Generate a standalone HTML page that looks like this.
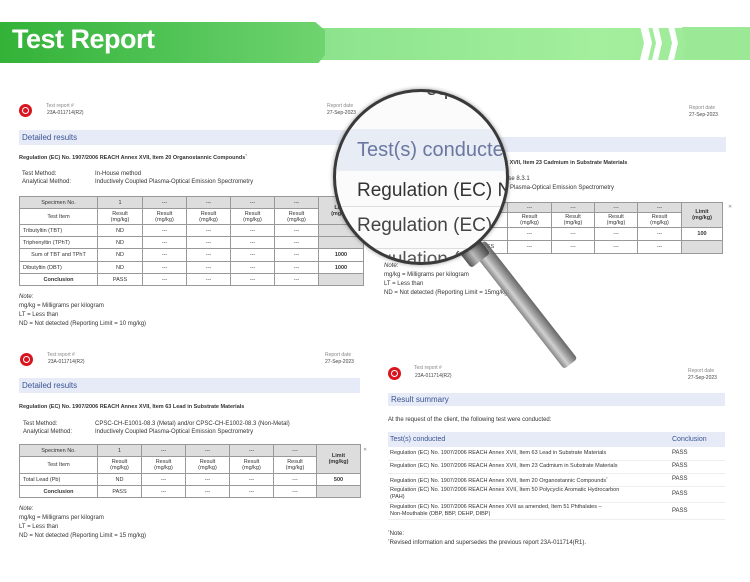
<!DOCTYPE html>
<html><head><meta charset="utf-8"><style>
*{margin:0;padding:0;box-sizing:border-box}
body{width:750px;height:582px;background:#fff;position:relative;overflow:hidden;font-family:"Liberation Sans",sans-serif;color:#222}
.a{position:absolute;white-space:nowrap}
.s{font-size:5px;color:#888}
.t{font-size:6px;color:#333}
.b{font-weight:bold}
.bar{position:absolute;background:#e6ebf7;color:#3b5592;font-size:8px;padding-left:3px;display:flex;align-items:center}
.logo{position:absolute;width:13px;height:13px;border-radius:50%;background:#d9141e}
.logo:after{content:"";position:absolute;left:3px;top:3px;width:5px;height:5px;border:1.3px solid #fff;border-radius:50%}
table{position:absolute;border-collapse:collapse;font-size:5.5px;color:#333;table-layout:fixed}
td{border:1px solid #999;text-align:center;padding:0;line-height:6px}
td.l{text-align:left;padding-left:3px}
.g{background:#ddd}
</style></head><body>

<!-- banner -->
<div class="a" style="left:0;top:27px;width:750px;height:57px;background:linear-gradient(90deg,#4cc24e 0%,#8ee48e 45%,#a3ef9e 80%,#9be896 100%);top:28px;height:32px"></div>
<div class="a" style="left:0;top:22px;width:325px;height:41px;background:linear-gradient(90deg,#33b238,#55c65a 60%,#6fd46f);clip-path:polygon(0 0,97% 0,100% 20%,100% 80%,98% 100%,0 100%)"></div>
<div class="a" style="left:12px;top:24px;font-size:27px;font-weight:bold;color:#fff;letter-spacing:-.5px">Test Report</div>
<svg class="a" style="left:640px;top:26px" width="110" height="34"><g fill="#fff"><polygon points="0,0 8,0 12,17 8,34 0,34 4,17"/><polygon points="12,0 18,0 22,17 18,34 12,34 16,17"/><polygon points="28,0 34,0 38,17 34,34 28,34 32,17"/></g><polygon points="42,1 110,1 110,33 42,33 46,17" fill="#9be896"/></svg>

<!-- doc 1 -->
<div class="logo" style="left:19px;top:104px"></div>
<div class="a s" style="left:46px;top:103px">Test report #</div>
<div class="a s" style="left:47px;top:110px;color:#444">23A-011714(R2)</div>
<div class="a s" style="left:327px;top:103px">Report date</div>
<div class="a s" style="left:327px;top:110px;color:#444">27-Sep-2023</div>
<div class="bar" style="left:19px;top:130px;width:346px;height:15px">Detailed results</div>
<div class="a t b" style="left:19px;top:153px;font-size:5.5px">Regulation (EC) No. 1907/2006 REACH Annex XVII, Item 20 Organostannic Compounds<sup style="font-size:3px">†</sup></div>
<div class="a t" style="left:22px;top:171px">Test Method:</div>
<div class="a t" style="left:95px;top:171px">In-House method</div>
<div class="a t" style="left:22px;top:179px">Analytical Method:</div>
<div class="a t" style="left:95px;top:179px">Inductively Coupled Plasma-Optical Emission Spectrometry</div>
<table style="left:19px;top:196px;width:344px">
<col style="width:78px"><col style="width:45px"><col style="width:44px"><col style="width:44px"><col style="width:44px"><col style="width:44px"><col style="width:45px">
<tr style="height:12px"><td class="g">Specimen No.</td><td class="g">1</td><td class="g">---</td><td class="g">---</td><td class="g">---</td><td class="g">---</td><td class="g b" rowspan="2">Limit<br>(mg/kg)</td></tr>
<tr style="height:16px"><td>Test Item</td><td>Result<br>(mg/kg)</td><td>Result<br>(mg/kg)</td><td>Result<br>(mg/kg)</td><td>Result<br>(mg/kg)</td><td>Result<br>(mg/kg)</td></tr>
<tr style="height:12px"><td class="l">Tributyltin (TBT)</td><td>ND</td><td>---</td><td>---</td><td>---</td><td>---</td><td class="g"></td></tr>
<tr style="height:12px"><td class="l">Triphenyltin (TPhT)</td><td>ND</td><td>---</td><td>---</td><td>---</td><td>---</td><td class="g"></td></tr>
<tr style="height:13px"><td>Sum of TBT and TPhT</td><td>ND</td><td>---</td><td>---</td><td>---</td><td>---</td><td class="b">1000</td></tr>
<tr style="height:12px"><td class="l">Dibutyltin (DBT)</td><td>ND</td><td>---</td><td>---</td><td>---</td><td>---</td><td class="b">1000</td></tr>
<tr style="height:12px"><td class="b">Conclusion</td><td>PASS</td><td>---</td><td>---</td><td>---</td><td>---</td><td class="g"></td></tr>
</table>
<div class="a t" style="left:19px;top:294px;font-style:italic">Note:</div>
<div class="a t" style="left:19px;top:303px">mg/kg = Milligrams per kilogram</div>
<div class="a t" style="left:19px;top:312px">LT = Less than</div>
<div class="a t" style="left:19px;top:321px">ND = Not detected (Reporting Limit = 10 mg/kg)</div>

<!-- doc 2 (top right) -->
<div class="a s" style="left:689px;top:105px">Report date</div>
<div class="a s" style="left:689px;top:112px;color:#444">27-Sep-2023</div>
<div class="a" style="left:470px;top:137px;width:256px;height:15px;background:#e6ebf7"></div>
<div class="a t b" style="left:505px;top:160px;font-size:5.5px">x XVII, Item 23 Cadmium in Substrate Materials</div>
<div class="a t" style="left:505px;top:176px">use 8.3.1</div>
<div class="a t" style="left:505px;top:185px">d Plasma-Optical Emission Spectrometry</div>
<table style="left:466px;top:202px;width:256px">
<col style="width:41px"><col style="width:44px"><col style="width:43px"><col style="width:43px"><col style="width:44px"><col style="width:41px">
<tr style="height:10px"><td class="g"></td><td class="g">---</td><td class="g">---</td><td class="g">---</td><td class="g">---</td><td class="g b" rowspan="2">Limit<br>(mg/kg)</td></tr>
<tr style="height:15px"><td></td><td>Result<br>(mg/kg)</td><td>Result<br>(mg/kg)</td><td>Result<br>(mg/kg)</td><td>Result<br>(mg/kg)</td></tr>
<tr style="height:13px"><td></td><td>---</td><td>---</td><td>---</td><td>---</td><td class="b">100</td></tr>
<tr style="height:13px"><td>PASS</td><td>---</td><td>---</td><td>---</td><td>---</td><td class="g"></td></tr>
</table>
<div class="a s" style="left:728px;top:204px">✕</div>
<div class="a t" style="left:384px;top:263px;font-style:italic">Note:</div>
<div class="a t" style="left:384px;top:272px">mg/kg = Milligrams per kilogram</div>
<div class="a t" style="left:384px;top:281px">LT = Less than</div>
<div class="a t" style="left:384px;top:290px">ND = Not detected (Reporting Limit = 15mg/kg)</div>

<!-- doc 3 (bottom left) -->
<div class="logo" style="left:20px;top:353px"></div>
<div class="a s" style="left:47px;top:352px">Test report #</div>
<div class="a s" style="left:48px;top:359px;color:#444">23A-011714(R2)</div>
<div class="a s" style="left:325px;top:352px">Report date</div>
<div class="a s" style="left:325px;top:359px;color:#444">27-Sep-2023</div>
<div class="bar" style="left:19px;top:378px;width:341px;height:15px">Detailed results</div>
<div class="a t b" style="left:19px;top:404px;font-size:5.5px">Regulation (EC) No. 1907/2006 REACH Annex XVII, Item 63 Lead in Substrate Materials</div>
<div class="a t" style="left:23px;top:421px">Test Method:</div>
<div class="a t" style="left:95px;top:421px">CPSC-CH-E1001-08.3 (Metal) and/or CPSC-CH-E1002-08.3 (Non-Metal)</div>
<div class="a t" style="left:23px;top:429px">Analytical Method:</div>
<div class="a t" style="left:95px;top:429px">Inductively Coupled Plasma-Optical Emission Spectrometry</div>
<table style="left:19px;top:444px;width:341px">
<col style="width:78px"><col style="width:44px"><col style="width:44px"><col style="width:44px"><col style="width:44px"><col style="width:43px"><col style="width:44px">
<tr style="height:12px"><td class="g">Specimen No.</td><td class="g">1</td><td class="g">---</td><td class="g">---</td><td class="g">---</td><td class="g">---</td><td class="g b" rowspan="2">Limit<br>(mg/kg)</td></tr>
<tr style="height:17px"><td>Test Item</td><td>Result<br>(mg/kg)</td><td>Result<br>(mg/kg)</td><td>Result<br>(mg/kg)</td><td>Result<br>(mg/kg)</td><td>Result<br>(mg/kg)</td></tr>
<tr style="height:12px"><td class="l">Total Lead (Pb)</td><td>ND</td><td>---</td><td>---</td><td>---</td><td>---</td><td class="b">500</td></tr>
<tr style="height:12px"><td class="b">Conclusion</td><td>PASS</td><td>---</td><td>---</td><td>---</td><td>---</td><td class="g"></td></tr>
</table>
<div class="a s" style="left:363px;top:447px">✕</div>
<div class="a t" style="left:19px;top:506px;font-style:italic">Note:</div>
<div class="a t" style="left:19px;top:515px">mg/kg = Milligrams per kilogram</div>
<div class="a t" style="left:19px;top:524px">LT = Less than</div>
<div class="a t" style="left:19px;top:533px">ND = Not detected (Reporting Limit = 15 mg/kg)</div>

<!-- doc 4 (bottom right) -->
<div class="logo" style="left:388px;top:367px"></div>
<div class="a s" style="left:414px;top:365px">Test report #</div>
<div class="a s" style="left:415px;top:373px;color:#444">23A-011714(R2)</div>
<div class="a s" style="left:688px;top:368px">Report date</div>
<div class="a s" style="left:688px;top:375px;color:#444">27-Sep-2023</div>
<div class="bar" style="left:388px;top:393px;width:337px;height:13px">Result summary</div>
<div class="a t" style="left:388px;top:417px">At the request of the client, the following test were conducted:</div>
<div class="a" style="left:388px;top:432px;width:337px;height:15px;background:#e6ebf7"></div>
<div class="a" style="left:390px;top:436px;font-size:7px;color:#3b5592">Test(s) conducted</div>
<div class="a" style="left:672px;top:436px;font-size:7px;color:#3b5592">Conclusion</div>
<div class="a t" style="left:390px;top:450px;font-size:5.5px">Regulation (EC) No. 1907/2006 REACH Annex XVII, Item 63 Lead in Substrate Materials</div>
<div class="a t" style="left:672px;top:450px">PASS</div>
<div class="a t" style="left:390px;top:463px;font-size:5.5px">Regulation (EC) No. 1907/2006 REACH Annex XVII, Item 23 Cadmium in Substrate Materials</div>
<div class="a t" style="left:672px;top:463px">PASS</div>
<div class="a t" style="left:390px;top:476px;font-size:5.5px">Regulation (EC) No. 1907/2006 REACH Annex XVII, Item 20 Organostannic Compounds<sup style="font-size:3px">†</sup></div>
<div class="a t" style="left:672px;top:476px">PASS</div>
<div class="a t" style="left:390px;top:487px;font-size:5.5px;line-height:7px">Regulation (EC) No. 1907/2006 REACH Annex XVII, Item 50 Polycyclic Aromatic Hydrocarbon<br>(PAH)</div>
<div class="a t" style="left:672px;top:491px">PASS</div>
<div class="a t" style="left:390px;top:504px;font-size:5.5px;line-height:7px">Regulation (EC) No. 1907/2006 REACH Annex XVII as amended, Item 51 Phthalates –<br>Non-Mouthable (DBP, BBP, DEHP, DIBP)</div>
<div class="a t" style="left:672px;top:508px">PASS</div>
<div class="a" style="left:388px;top:460px;width:337px;border-top:1px solid #eee"></div>
<div class="a" style="left:388px;top:473px;width:337px;border-top:1px solid #eee"></div>
<div class="a" style="left:388px;top:486px;width:337px;border-top:1px solid #eee"></div>
<div class="a" style="left:388px;top:502px;width:337px;border-top:1px solid #eee"></div>
<div class="a" style="left:388px;top:519px;width:337px;border-top:1px solid #eee"></div>
<div class="a t" style="left:388px;top:529px"><sup style="font-size:3px">†</sup>Note:</div>
<div class="a t" style="left:388px;top:538px"><sup style="font-size:3px">†</sup>Revised information and supersedes the previous report 23A-011714(R1).</div>

<!-- magnifier handle -->
<div class="a" style="left:470px;top:246px;width:17px;height:150px;transform-origin:8px 0;transform:rotate(-38deg);background:linear-gradient(90deg,#777,#ccc 35%,#999 60%,#555);border-radius:3px;opacity:.9"></div>
<div class="a" style="left:462px;top:241px;width:24px;height:22px;transform:rotate(-38deg);background:linear-gradient(90deg,#555,#bbb 40%,#444);border-radius:3px"></div>
<!-- lens -->
<div class="a" style="left:333px;top:89px;width:176px;height:176px;border-radius:50%;border:3px solid #3a3a3a;overflow:hidden;background:#fbfbfb;box-shadow:0 0 4px rgba(0,0,0,.4)">
  <div class="a" style="left:0;top:37px;width:176px;height:42px;background:#e8ecf5"></div>
  <div class="a" style="left:0;top:114px;width:176px;border-top:1px solid #ddd"></div>
  <div class="a" style="left:0;top:156px;width:176px;border-top:1px solid #ddd"></div>
  <div class="a" style="left:90px;top:-14px;font-size:20px;color:#444">equ</div>
  <div class="a" style="left:21px;top:47px;font-size:20px;color:#6a77a0">Test(s) conducted</div>
  <div class="a" style="left:21px;top:88px;font-size:19px;color:#333">Regulation (EC) No.</div>
  <div class="a" style="left:21px;top:123px;font-size:19px;color:#444">Regulation (EC) N</div>
  <div class="a" style="left:21px;top:157px;font-size:19px;color:#555">Regulation (E</div>
</div>
</body></html>
